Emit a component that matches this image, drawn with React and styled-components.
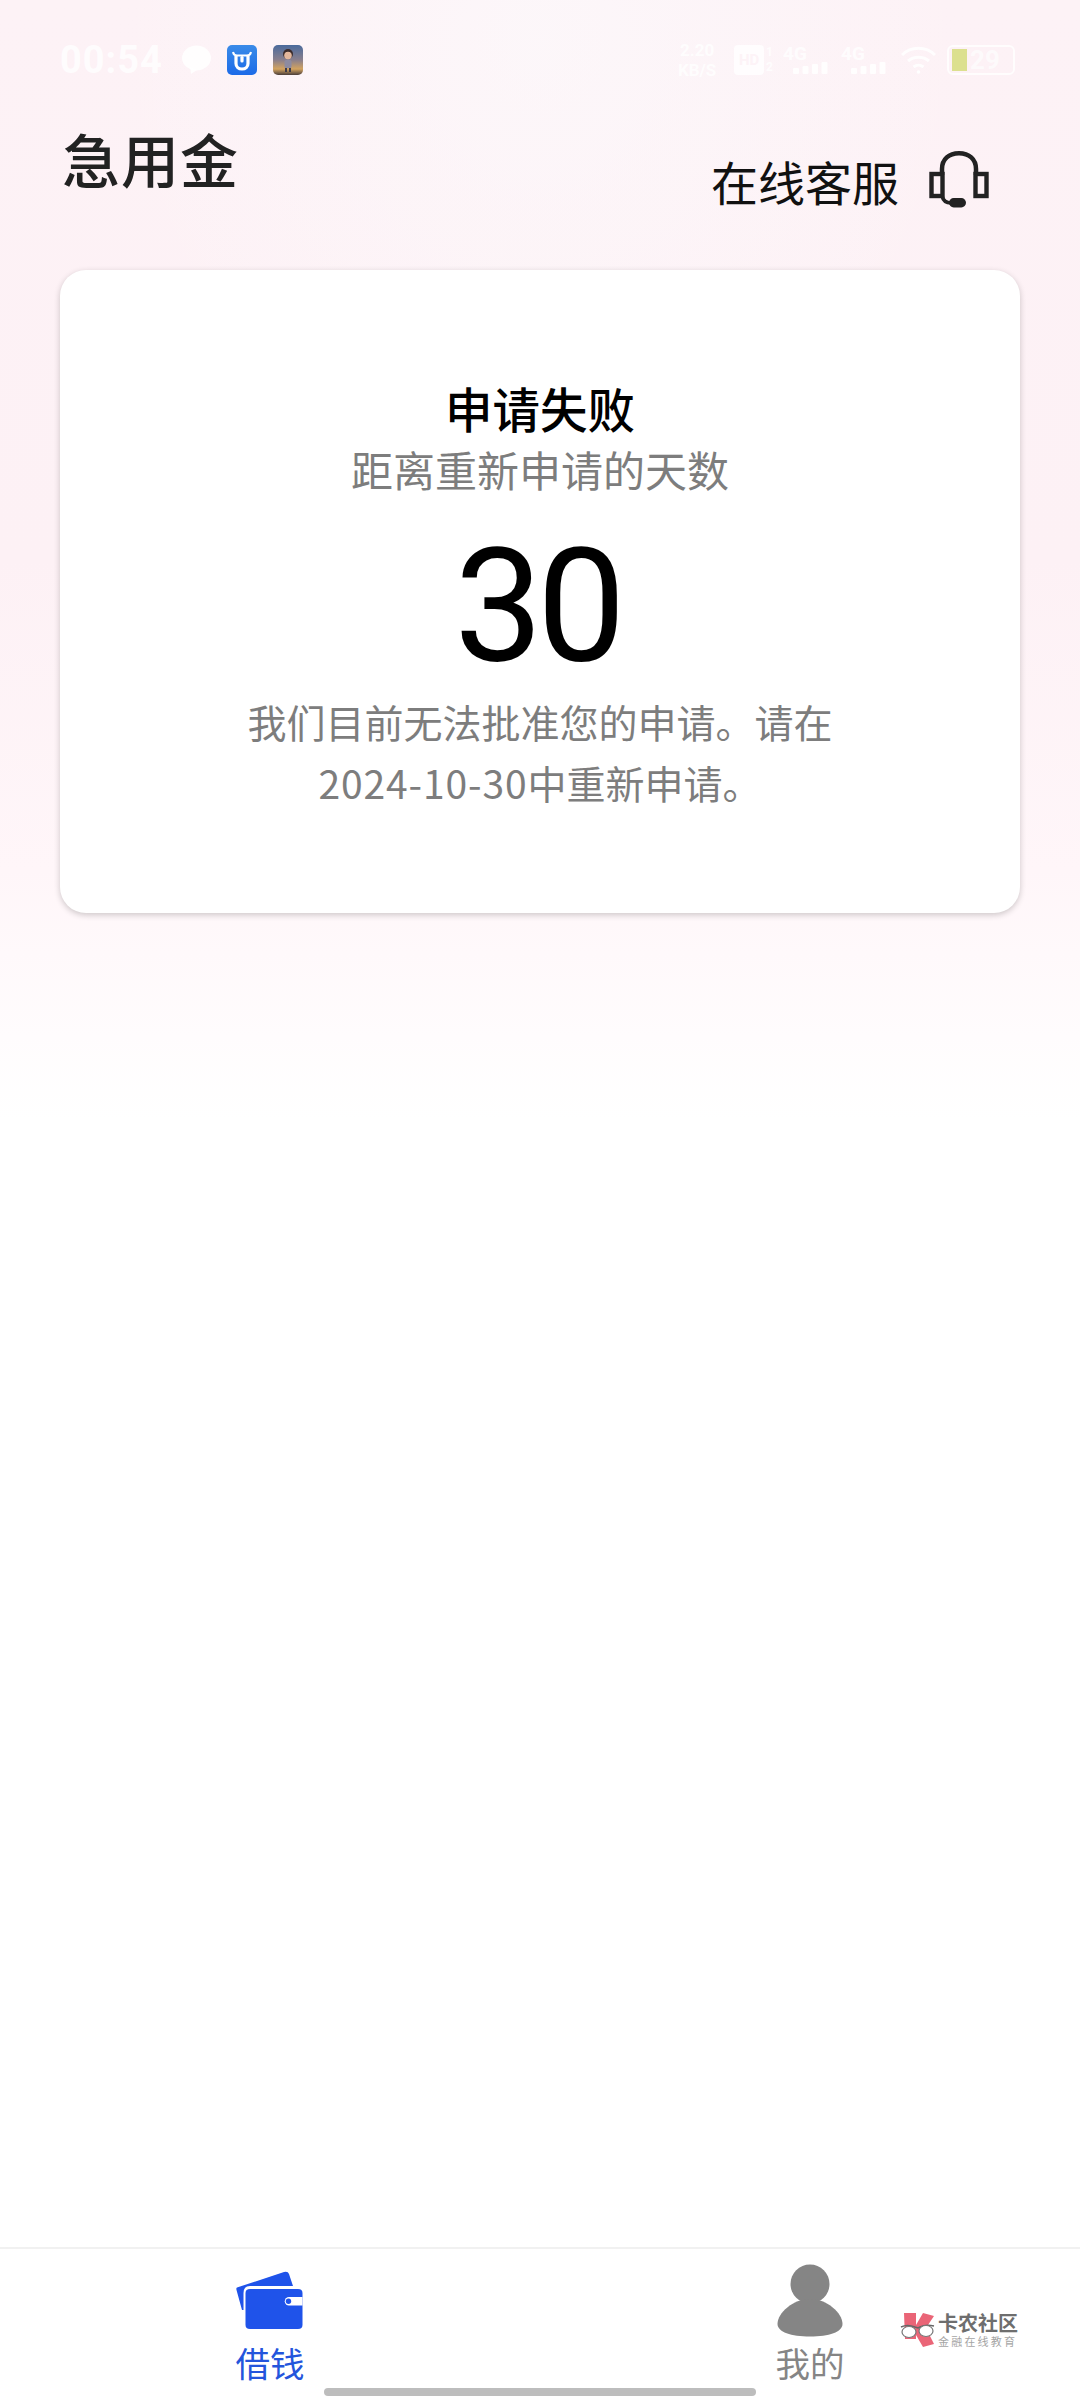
import React from "react";
import styled, { createGlobalStyle } from "styled-components";

const Global = createGlobalStyle`
  html, body { margin: 0; padding: 0; background: #fff; }
  * { box-sizing: border-box; }
  body { font-family: "Noto Sans CJK SC", "Noto Sans", sans-serif; }
`;

const Page = styled.div`
  position: relative;
  width: 1080px;
  height: 2400px;
  display: flex;
  flex-direction: column;
  overflow: hidden;
  background:
    radial-gradient(ellipse 430px 480px at 50% 40px, rgba(252,250,252,.6), rgba(255,255,255,0)),
    linear-gradient(180deg, #fdf2f6 0, #fdf1f5 560px, #fff6f9 870px, #ffffff 1120px);
`;

const StatusBar = styled.div`
  height: 60px;
  margin-top: 30px;
  padding: 0 65px 0 60px;
  display: flex;
  align-items: center;
  justify-content: space-between;
  color: rgba(255,255,255,.82);
`;
const StatusGroup = styled.div`
  display: flex;
  align-items: center;
  gap: ${p => p.$gap}px;
`;
const Clock = styled.span`
  font: 700 38px/1 Roboto, sans-serif;
  letter-spacing: 1px;
  margin-right: 3px;
`;
const Rate = styled.span`
  width: 46px;
  display: flex;
  flex-direction: column;
  align-items: center;
  font: 700 17px/20px Roboto, sans-serif;
`;
const Hd = styled.span`
  margin: 0 -3px 0 1px;
  display: flex;
  align-items: center;
  gap: 2px;
`;
const HdBox = styled.span`
  width: 30px;
  height: 30px;
  background: rgba(255,255,255,.8);
  border-radius: 4px;
  color: #fdf3f7;
  font: 700 15px/30px Roboto, sans-serif;
  text-align: center;
`;
const HdSlots = styled.span`
  display: flex;
  flex-direction: column;
  font: 700 12px/15px Roboto, sans-serif;
`;
const Net = styled.span`
  width: 45px;
  display: flex;
  flex-direction: column;
  align-items: flex-start;
  gap: 1px;
  font: 700 19px/15px Roboto, sans-serif;
`;
const SignalWrap = styled.span`
  display: flex;
  align-self: flex-end;
`;
const WifiWrap = styled.span`
  display: flex;
  margin: 0 -2px 0 2px;
`;
const Battery = styled.span`
  width: 68px;
  height: 30px;
  border: 2px solid rgba(255,255,255,.8);
  border-radius: 6px;
  padding: 2px 0 2px 3px;
  display: flex;
  align-items: center;
  gap: 3px;
`;
const BatteryFill = styled.span`
  width: 15px;
  height: 22px;
  background: #dce08f;
`;
const BatteryText = styled.span`
  font: 700 26px/24px Roboto, sans-serif;
  opacity: .85;
`;

const Header = styled.header`
  height: 137px;
  margin-top: 43px;
  padding: 0 91px 0 62px;
  display: flex;
  justify-content: space-between;
`;
const Title = styled.h1`
  margin: -4px 0 0;
  font-size: 58px;
  line-height: 58px;
  font-weight: 500;
  color: #222;
  letter-spacing: 1px;
`;
const Service = styled.div`
  display: flex;
  align-items: center;
  gap: 30px;
  height: 58px;
  margin-top: 18px;
  font-size: 47px;
  color: #111;
`;

const Card = styled.section`
  margin: 0 60px;
  height: 643px;
  background: #fff;
  border-radius: 26px;
  box-shadow: 0 2px 6px rgba(0,0,0,.2);
  display: flex;
  flex-direction: column;
  align-items: center;
  padding-top: 108px;
`;
const CardTitle = styled.h2`
  margin: 0;
  font-size: 47.5px;
  line-height: 60px;
  font-weight: 500;
  color: #000;
`;
const CardSub = styled.div`
  font-size: 42px;
  line-height: 60px;
  margin-top: 1px;
  color: #7d7d7d;
`;
const Days = styled.div`
  font: 400 158px/160px Roboto, sans-serif;
  letter-spacing: -6px;
  padding-right: 6px;
  color: #000;
  margin-top: 27px;
  margin-bottom: 5px;
`;
const Note = styled.p`
  margin: 0;
  width: 640px;
  text-align: center;
  font-size: 39px;
  line-height: 61px;
  color: #7d7d7d;
`;
const DateText = styled.span`
  letter-spacing: .9px;
`;

const Spacer = styled.div` flex: 1; `;

const TabBar = styled.nav`
  height: 153px;
  background: #fff;
  border-top: 2px solid #f1f1f1;
  display: flex;
  flex-direction: column;
`;
const Tabs = styled.div`
  display: grid;
  grid-template-columns: 1fr 1fr;
  height: 139px;
`;
const Tab = styled.div`
  display: flex;
  flex-direction: column;
  align-items: center;
  justify-content: flex-end;
  gap: 2px;
  padding-bottom: 2px;
  color: ${p => p.$active ? "#2355dc" : "#858585"};
  font-size: 34.500px;
  line-height: 48px;
`;
const IconSlot = styled.span`
  display: flex;
  margin-bottom: ${p => p.$lift}px;
`;
const HomeBar = styled.div`
  width: 432px;
  height: 8px;
  border-radius: 4px;
  background: #bdbdbd;
  align-self: center;
`;

const Watermark = styled.div`
  position: absolute;
  left: 900px;
  top: 2312px;
  display: flex;
  align-items: center;
  gap: 2px;
`;
const WatermarkText = styled.div`
  display: flex;
  flex-direction: column;
  align-items: flex-start;
`;
const WatermarkMain = styled.span`
  font-size: 20px;
  line-height: 22px;
  font-weight: 700;
  color: #6e6e6e;
`;
const WatermarkSub = styled.span`
  font-size: 11px;
  line-height: 14px;
  letter-spacing: 2.2px;
  color: #a5a5a5;
`;

const Bubble = () => (
  <svg width="29" height="30" viewBox="0 0 29 30">
    <ellipse cx="14.500" cy="13" rx="14.500" ry="12.500" fill="#fff" fillOpacity=".85" />
    <path d="M8 22l1 7 6-4z" fill="#fff" fillOpacity=".85" />
  </svg>
);

const AppIcon = () => (
  <svg width="30" height="30" viewBox="0 0 30 30">
    <defs>
      <linearGradient id="appBlue" x1="0" y1="0" x2="0" y2="1">
        <stop offset="0" stopColor="#3a8be8" />
        <stop offset="1" stopColor="#1c6be8" />
      </linearGradient>
    </defs>
    <rect width="30" height="30" rx="5" fill="url(#appBlue)" />
    <path d="M6 7c.5 2.500 2 3.500 4 3.500h10c2 0 3.500-1 4-3.500" fill="none" stroke="#fff" strokeWidth="2" />
    <path d="M9 11v7.500c0 3.500 2.500 5.500 6 5.500s6-2 6-5.500V11" fill="none" stroke="#fff" strokeWidth="3.200" />
    <rect x="13.400" y="11" width="3.200" height="6.500" rx="1.500" fill="#fff" />
  </svg>
);

const Avatar = () => (
  <svg width="30" height="30" viewBox="0 0 30 30">
    <defs>
      <linearGradient id="sky" x1="0" y1="0" x2="0" y2="1">
        <stop offset="0" stopColor="#4a6a9c" />
        <stop offset=".5" stopColor="#8a7f8c" />
        <stop offset=".8" stopColor="#d3a35f" />
        <stop offset="1" stopColor="#4a3d3a" />
      </linearGradient>
      <clipPath id="round"><rect width="30" height="30" rx="5" /></clipPath>
    </defs>
    <g clipPath="url(#round)">
      <rect width="30" height="30" fill="url(#sky)" />
      <circle cx="15" cy="9" r="5" fill="#3c2c2c" />
      <circle cx="15" cy="10.500" r="3.800" fill="#e4b79c" />
      <rect x="11.500" y="15" width="7" height="8" rx="1.500" fill="#8d8ba0" />
      <rect x="12" y="23" width="2" height="4" fill="#3d3a48" />
      <rect x="16" y="23" width="2" height="4" fill="#3d3a48" />
    </g>
  </svg>
);

const Signal = () => (
  <svg width="35" height="12" viewBox="0 0 35 12" fill="#fff" fillOpacity=".85">
    <rect x="0" y="6" width="6" height="6" rx="1" />
    <rect x="9.500" y="4" width="6" height="8" rx="1" />
    <rect x="19" y="2" width="6" height="10" rx="1" />
    <rect x="28.500" y="0" width="6" height="12" rx="1" />
  </svg>
);

const Wifi = () => (
  <svg width="35" height="28" viewBox="0 0 35 28" fill="none" stroke="#fff" strokeOpacity=".85" strokeWidth="3">
    <path d="M1 9c9-9 24-9 33 0" />
    <path d="M7 15c6-5 15-5 21 0" />
    <path d="M12.500 21c3-2.500 7-2.500 10 0" />
    <circle cx="17.500" cy="26" r="1.800" fill="#fff" stroke="none" />
  </svg>
);

const Headset = () => (
  <svg width="60" height="58" viewBox="0 0 60 58" fill="none" stroke="#222">
    <path d="M13 24v-6C13 8 20 2.300 30 2.300S47 8 47 18v6" strokeWidth="4.500" />
    <rect x="2.500" y="23" width="11" height="22" strokeWidth="4.400" />
    <rect x="46.500" y="23" width="11" height="22" strokeWidth="4.400" />
    <path d="M13 45c1 4 4 7 9 7" strokeWidth="3.600" />
    <rect x="20" y="47" width="17" height="9.500" rx="4.700" fill="#222" stroke="none" />
  </svg>
);

const Wallet = () => (
  <svg width="68" height="60" viewBox="0 0 68 60">
    <path d="M1 16.500L48 1q4-1 5 2l4 12H14q-6.500 0-6.500 7v17H6L.5 19q-.5-2 .5-2.500z" fill="#1f53ea" />
    <path d="M14 18h48q4.500 0 4.500 4v32q0 4-4.500 4H14q-4.500 0-4.500-4V22q0-4 4.500-4z" fill="#1f53ea" />
    <path d="M53 26h13.500v8.500H53a4.250 4.250 0 0 1 0-8.500z" fill="#fff" />
    <circle cx="52.500" cy="30.200" r="2.700" fill="#1f53ea" />
  </svg>
);

const Person = () => (
  <svg width="66" height="73" viewBox="0 0 66 73" fill="#858585">
    <circle cx="33" cy="20" r="19.500" />
    <path d="M33 35c-17 0-32.500 14-32.500 25C.5 68 14 72.500 33 72.500S65.500 68 65.500 60C65.500 49 50 35 33 35z" />
  </svg>
);

const KLogo = () => (
  <svg width="36" height="36" viewBox="0 0 36 36">
    <path d="M4 1h12v12L23 1l11 3-8 12 8 16-11 3-7-12v4H5z" fill="#ea6577" />
    <path d="M1 15c4-2 9-2 14 0l3 1 2-1c4-2 10-2 14-1" fill="none" stroke="#666" strokeWidth="1.400" />
    <ellipse cx="9" cy="20" rx="7" ry="5.500" fill="#fff" stroke="#777" strokeWidth="1.200" />
    <ellipse cx="26" cy="19" rx="7" ry="5.500" fill="#fff" stroke="#777" strokeWidth="1.200" />
  </svg>
);

export default function App() {
  return (
    <Page>
      <Global />
      <StatusBar>
        <StatusGroup $gap={16}>
          <Clock>00:54</Clock>
          <Bubble />
          <AppIcon />
          <Avatar />
        </StatusGroup>
        <StatusGroup $gap={13}>
          <Rate><span>2.20</span><span>KB/S</span></Rate>
          <Hd><HdBox>HD</HdBox><HdSlots><span>1</span><span>2</span></HdSlots></Hd>
          <Net><span>4G</span><SignalWrap><Signal /></SignalWrap></Net>
          <Net><span>4G</span><SignalWrap><Signal /></SignalWrap></Net>
          <WifiWrap><Wifi /></WifiWrap>
          <Battery>
            <BatteryFill />
            <BatteryText>29</BatteryText>
          </Battery>
        </StatusGroup>
      </StatusBar>
      <Header>
        <Title>急用金</Title>
        <Service>
          <span>在线客服</span>
          <Headset />
        </Service>
      </Header>
      <Card>
        <CardTitle>申请失败</CardTitle>
        <CardSub>距离重新申请的天数</CardSub>
        <Days>30</Days>
        <Note>我们目前无法批准您的申请。请在<br /><DateText>2024-10-30</DateText>中重新申请。</Note>
      </Card>
      <Spacer />
      <TabBar>
        <Tabs>
          <Tab $active><IconSlot $lift={5}><Wallet /></IconSlot><span>借钱</span></Tab>
          <Tab><IconSlot $lift={-1}><Person /></IconSlot><span>我的</span></Tab>
        </Tabs>
        <HomeBar />
      </TabBar>
      <Watermark>
        <KLogo />
        <WatermarkText>
          <WatermarkMain>卡农社区</WatermarkMain>
          <WatermarkSub>金融在线教育</WatermarkSub>
        </WatermarkText>
      </Watermark>
    </Page>
  );
}
